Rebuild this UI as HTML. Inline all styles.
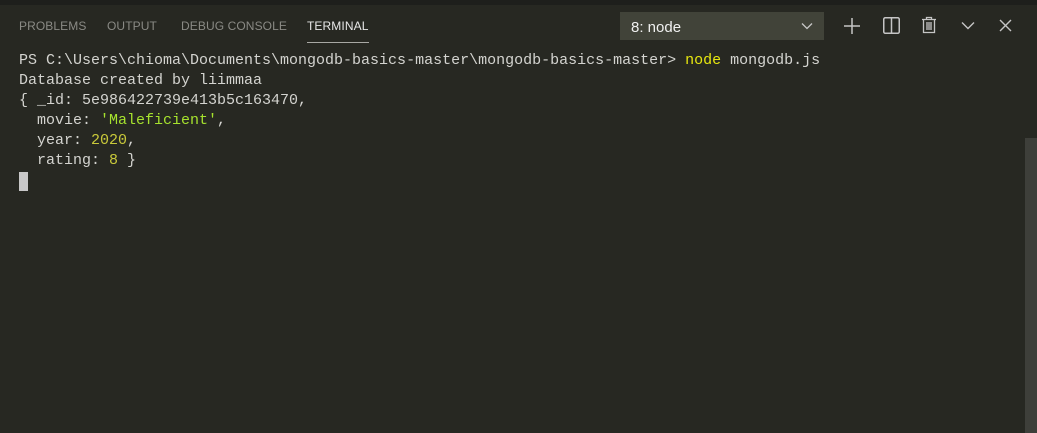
<!DOCTYPE html>
<html><head><meta charset="utf-8"><style>
html,body{margin:0;padding:0;width:1037px;height:433px;overflow:hidden;background:#272822;}
.top{position:absolute;left:0;top:0;width:1037px;height:5px;background:#1e1f1c;}
.tab{position:absolute;top:19px;font:12px "Liberation Sans",sans-serif;color:#8a8a85;letter-spacing:0.1px;}
.tab.a{color:#e7e7e7;}
.ul{position:absolute;left:307px;top:42px;width:62px;height:1px;background:#a8a8a4;}
.dd{position:absolute;left:620px;top:12px;width:204px;height:28px;background:#414339;}
.dd span{position:absolute;left:11px;top:7px;font:15px "Liberation Sans",sans-serif;color:#f0f0f0;}
pre{position:absolute;left:19px;top:51px;margin:0;font:15px/20px "Liberation Mono",monospace;color:#d4d4d0;}
.yy{color:#e6e60f;}
.g{color:#a6e22e;}
.n{color:#c9c93a;}
.cur{position:absolute;left:19px;top:172px;width:9px;height:19px;background:#c8c8c8;}
.sb{position:absolute;left:1025px;top:138px;width:12px;height:295px;background:#3e3f3a;}
svg{position:absolute;}
</style></head><body>
<div class="top"></div>
<div class="tab" style="left:19px">PROBLEMS</div>
<div class="tab" style="left:107px">OUTPUT</div>
<div class="tab" style="left:181px">DEBUG CONSOLE</div>
<div class="tab a" style="left:307px">TERMINAL</div>
<div class="ul"></div>
<div class="dd"><span>8: node</span>
<svg style="left:181px;top:10px" width="12" height="8" viewBox="0 0 12 8"><path d="M1 1.5L6 6.5L11 1.5" stroke="#c8c8c8" stroke-width="1.3" fill="none"/></svg></div>
<svg style="left:843px;top:17px" width="18" height="18" viewBox="0 0 18 18"><path d="M9 1V17M1 9H17" stroke="#c5c5c5" stroke-width="1.5"/></svg>
<svg style="left:883px;top:17px" width="17" height="17" viewBox="0 0 17 17"><rect x="0.75" y="0.75" width="15.5" height="15.5" rx="1.5" stroke="#c5c5c5" stroke-width="1.5" fill="none"/><path d="M8.5 1V16" stroke="#c5c5c5" stroke-width="1.5"/></svg>
<svg style="left:921px;top:16px" width="16" height="18" viewBox="0 0 16 18"><path d="M1 3.5H15M5.5 3.5V1.5H10.5V3.5M2.5 3.5V16.5H13.5V3.5M6 6V14M8 6V14M10 6V14" stroke="#c5c5c5" stroke-width="1.3" fill="none"/></svg>
<svg style="left:961px;top:21px" width="14" height="9" viewBox="0 0 14 9"><path d="M1 1.5L7 7.5L13 1.5" stroke="#c5c5c5" stroke-width="1.4" fill="none"/></svg>
<svg style="left:999px;top:19px" width="13" height="13" viewBox="0 0 13 13"><path d="M1 1L12 12M12 1L1 12" stroke="#c5c5c5" stroke-width="1.4"/></svg>
<pre>PS C:\Users\chioma\Documents\mongodb-basics-master\mongodb-basics-master&gt; <span class="yy">node</span> mongodb.js
Database created by liimmaa
{ _id: 5e986422739e413b5c163470,
  movie: <span class="g">'Maleficient'</span>,
  year: <span class="n">2020</span>,
  rating: <span class="n">8</span> }</pre>
<div class="cur"></div>
<div class="sb"></div>
</body></html>
